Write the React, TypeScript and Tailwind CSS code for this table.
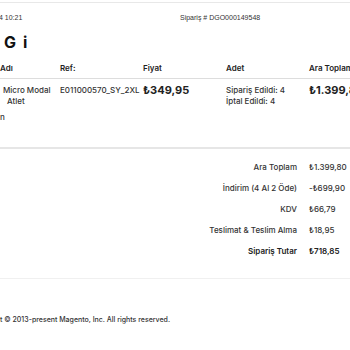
import React from 'react'

const totals = [
  { label: 'Ara Toplam', value: '₺1.399,80' },
  { label: 'İndirim (4 Al 2 Öde)', value: '-₺699,90' },
  { label: 'KDV', value: '₺66,79' },
  { label: 'Teslimat & Teslim Alma', value: '₺18,95' },
  { label: 'Sipariş Tutar', value: '₺718,85', bold: true },
]

export default function App() {
  return (
    <div className="w-[350px] h-[350px] overflow-hidden bg-white text-[#222]" style={{ fontFamily: 'Inter, sans-serif' }}>
      <div className="mt-[2px] border-t border-[#e8e8e8]" />

      <div className="flex h-[20px] items-end text-[7px] text-[#333]" style={{ fontFamily: '"Liberation Sans", Arial, sans-serif' }}>
        <span className="-ml-[1px] w-[181px]">4 10:21</span>
        <span>Sipariş # DGO000149548</span>
      </div>

      <div className="mt-[9px] pl-[4px] text-[16px] font-bold leading-[20px] tracking-[7px] text-[#111]">Gi</div>

      <div className="mt-[11px] grid grid-cols-[60px_83px_83px_83px_1fr] border-b border-[#ddd] pb-[5px] text-[8px] font-semibold leading-[10px]">
        <span>Adı</span>
        <span>Ref:</span>
        <span>Fiyat</span>
        <span>Adet</span>
        <span className="whitespace-nowrap">Ara Toplam</span>
      </div>

      <div className="grid h-[68px] grid-cols-[60px_83px_83px_83px_1fr] pt-[6px] text-[8px] font-medium leading-[11px] text-[#333]">
        <div className="flex flex-col">
          <span className="pl-[3px] whitespace-nowrap">Micro Modal</span>
          <span className="pl-[7px]">Atlet</span>
          <span className="mt-[5px]">n</span>
        </div>
        <span className="whitespace-nowrap">E011000570_SY_2XL</span>
        <span className="text-[11px] font-bold leading-[11px] text-[#222]">₺349,95</span>
        <div className="flex flex-col">
          <span>Sipariş Edildi: 4</span>
          <span>İptal Edildi: 4</span>
        </div>
        <span className="whitespace-nowrap text-[11px] font-bold leading-[11px] text-[#222]">₺1.399,80</span>
      </div>

      <div className="border-t-2 border-[#e6e6e6]" />

      <div className="flex flex-col gap-[10px] pt-[13px] text-[8px] font-medium leading-[11px] text-[#333]">
        {totals.map((t) => (
          <div key={t.label} className={'flex ' + (t.bold ? 'font-semibold text-[#222]' : '')}>
            <span className="w-[297px] text-right">{t.label}</span>
            <span className="ml-[12px]">{t.value}</span>
          </div>
        ))}
      </div>

      <div className="mt-[21px] border-t border-[#f0f0f0]" />

      <div className="mt-[36px] text-[7px] font-medium text-[#333]">
        t © 2013-present Magento, Inc. All rights reserved.
      </div>
    </div>
  )
}
